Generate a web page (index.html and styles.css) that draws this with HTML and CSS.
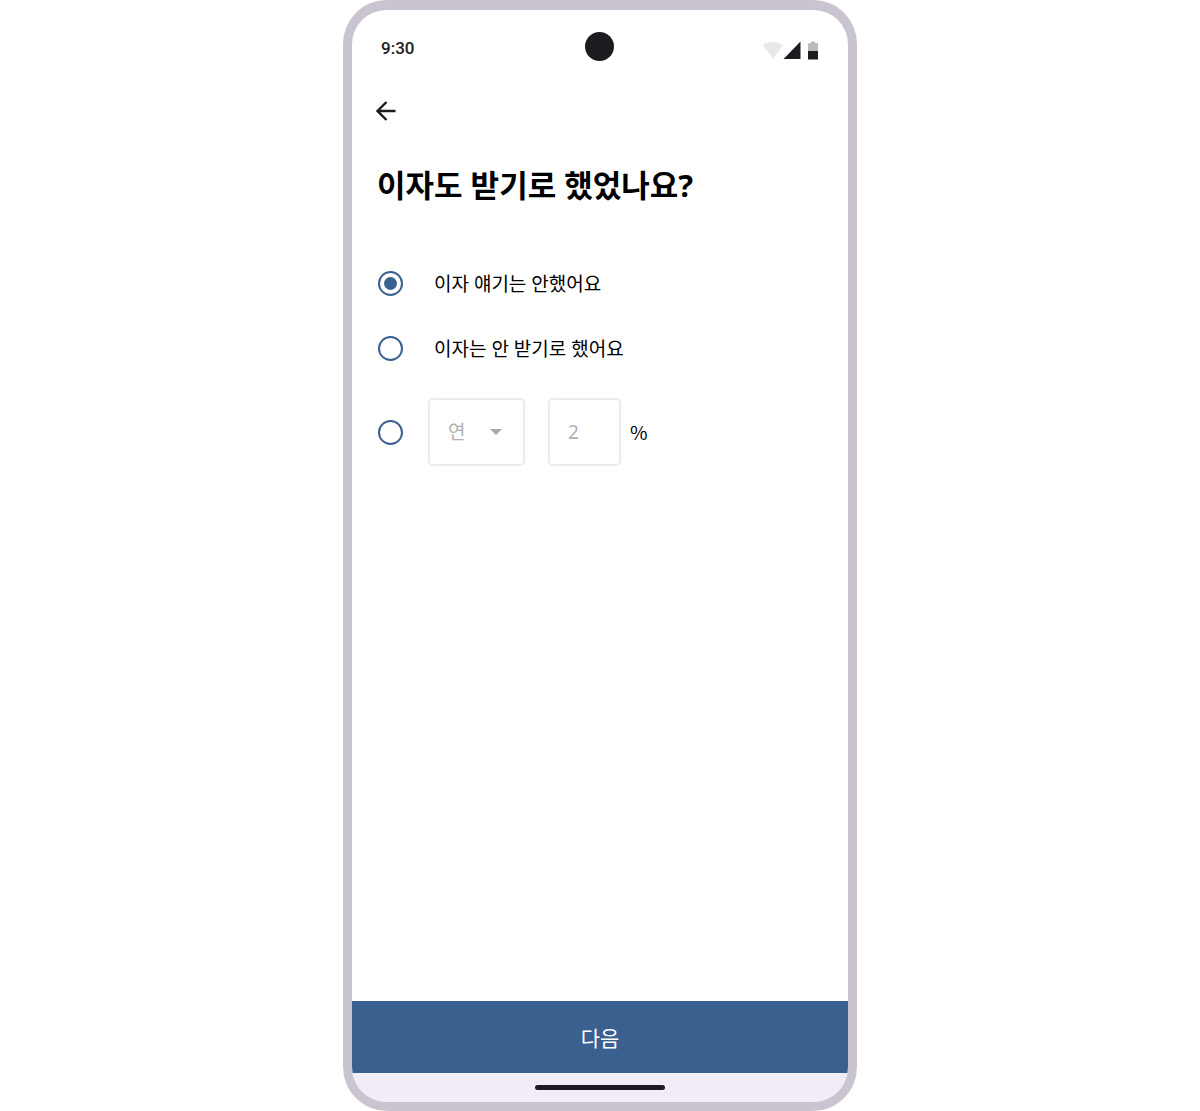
FILE: index.html
```html
<!DOCTYPE html>
<html lang="ko">

<head>
    <meta charset="UTF-8">
    <meta name="viewport" content="width=device-width, initial-scale=1.0">
    <title>이자 설정</title>
    <link rel="stylesheet" href="styles.css">
</head>

<body>
    <div class="phone">
        <div class="status-bar">
            <span class="time">9:30</span>
            <span class="camera"></span>
            <div class="status-icons">
                <svg width="20" height="20" viewBox="0 0 20 20">
                    <path d="M0 4.5C5.5-.4 14.5-.4 20 4.5L10 17.5Z" fill="#e8e8e8" />
                </svg>
                <svg width="18" height="20" viewBox="0 0 18 20">
                    <path d="M17.5 .5V18H.5Z" fill="#1d1b20" />
                </svg>
                <svg class="battery" width="10" height="20" viewBox="0 0 10 20">
                    <path d="M3 .5H7V2H9Q10 2 10 3V10H0V3Q0 2 1 2H3Z" fill="#bbbabc" />
                    <path d="M0 10H10V18.5H0Z" fill="#1d1b20" />
                </svg>
            </div>
        </div>

        <div class="app-bar">
            <button type="button" class="back-btn" aria-label="뒤로">
                <svg width="20" height="20" viewBox="0 0 20 20">
                    <path d="M19.5 10H2M10.5 1L1.5 10L10.5 19" fill="none" stroke="#1d1b20" stroke-width="2.4" />
                </svg>
            </button>
        </div>

        <form class="content" id="interest-form">
            <h1>이자도 받기로 했었나요?</h1>

            <div class="option">
                <input type="radio" name="interest" id="unspoken" checked>
                <label for="unspoken">이자 얘기는 안했어요</label>
            </div>
            <div class="option">
                <input type="radio" name="interest" id="none">
                <label for="none">이자는 안 받기로 했어요</label>
            </div>
            <div class="option rate">
                <input type="radio" name="interest" id="rate" aria-label="이자율 입력">
                <div class="select-box">
                    <select id="period" aria-label="기간">
                        <option>연</option>
                        <option>월</option>
                    </select>
                    <svg width="12" height="6" viewBox="0 0 12 6">
                        <path d="M0 0H12L6 6Z" fill="#a6a6a6" />
                    </svg>
                </div>
                <input type="text" class="percent" id="percent" value="2" inputmode="decimal">
                <label class="unit" for="percent">%</label>
            </div>
        </form>

        <button type="submit" class="next-btn" form="interest-form">다음</button>
        <div class="nav-bar">
            <span class="handle"></span>
        </div>
    </div>
</body>

</html>
```
FILE: styles.css
```css
* {
    box-sizing: border-box;
}

body {
    margin: 0;
    background: white;
    font-family: "Noto Sans", "Noto Sans CJK KR", sans-serif;
    color: black;
}

button,
input,
select {
    font-family: inherit;
}

.phone {
    display: flex;
    flex-direction: column;
    width: 100%;
    max-width: 514px;
    min-height: 100vh;
    margin: 0 auto;
    border: 9px solid #cac4d0;
    border-top-width: 10px;
    border-radius: 44px;
    overflow: hidden;
}

/* status bar */
.status-bar {
    display: grid;
    grid-template-columns: 1fr auto 1fr;
    align-items: end;
    padding: 22px 30px 11px 29px;
}

.time {
    font: 500 17px/26px Roboto, sans-serif;
    color: #1d1b20;
}

.camera {
    width: 29px;
    height: 29px;
    border-radius: 50%;
    background: #1d1b20;
}

.status-icons {
    display: flex;
    justify-content: flex-end;
    height: 20px;
}

.battery {
    margin-left: 7px;
}

/* app bar */
.app-bar {
    display: flex;
    align-items: center;
    height: 77px;
    padding: 0 14px;
}

.back-btn {
    display: flex;
    padding: 10px;
    border: none;
    background: none;
    cursor: pointer;
}

/* form */
.content {
    flex: 1;
    padding: 16px 25px;
}

h1 {
    margin: 0 0 46px;
    font-size: 31px;
    line-height: 40px;
    font-weight: 700;
}

.option {
    display: flex;
    align-items: center;
    min-height: 65px;
    font-size: 19px;
    line-height: 28px;
}

.option label {
    margin-left: 31px;
}

input[type="radio"] {
    appearance: none;
    display: grid;
    place-items: center;
    flex: none;
    width: 25px;
    height: 25px;
    margin: 0 0 0 1px;
    border: 2px solid #3a608f;
    border-radius: 50%;
    cursor: pointer;
}

input[type="radio"]:checked::before {
    content: "";
    width: 13px;
    height: 13px;
    border-radius: 50%;
    background: #3a608f;
}

.rate {
    margin-top: 17px;
}

.select-box {
    position: relative;
    margin: 0 23px 0 25px;
}

.select-box select,
.percent {
    height: 68px;
    padding: 0 18px;
    border: 2px solid #ebebeb;
    border-radius: 5px;
    background: white;
    color: #b0b0b0;
    font-size: 19px;
}

.select-box select {
    display: block;
    appearance: none;
    width: 97px;
}

.select-box svg {
    position: absolute;
    top: 31px;
    right: 23px;
    pointer-events: none;
}

.percent {
    width: 73px;
}

.option .unit {
    margin-left: 9px;
    font-family: "Noto Sans CJK KR", sans-serif;
}

/* bottom */
.next-btn {
    height: 72px;
    border: none;
    background: #3a608f;
    color: white;
    font-size: 21px;
    cursor: pointer;
}

.nav-bar {
    display: flex;
    justify-content: center;
    align-items: center;
    height: 29px;
    background: #f2ecf6;
}

.handle {
    width: 130px;
    height: 5px;
    border-radius: 3px;
    background: #1d1b20;
}
```
